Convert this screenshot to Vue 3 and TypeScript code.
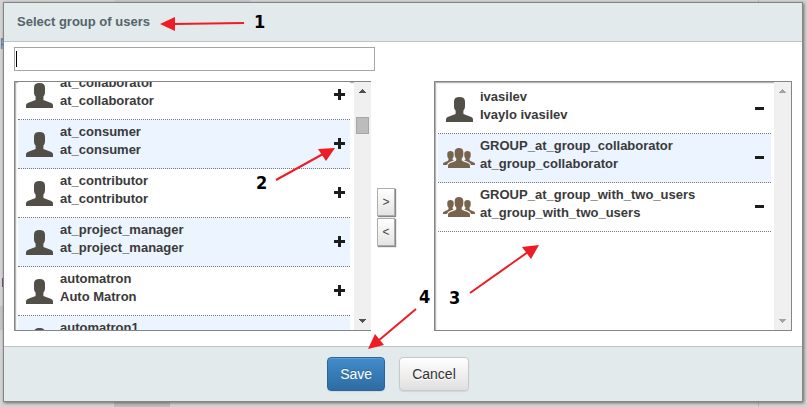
<script setup lang="ts">
import { onMounted, ref } from 'vue'

interface Authority {
  name: string
  label: string
  kind: 'user' | 'group'
}

const available = ref<Authority[]>([
  { name: 'at_collaborator', label: 'at_collaborator', kind: 'user' },
  { name: 'at_consumer', label: 'at_consumer', kind: 'user' },
  { name: 'at_contributor', label: 'at_contributor', kind: 'user' },
  { name: 'at_project_manager', label: 'at_project_manager', kind: 'user' },
  { name: 'automatron', label: 'Auto Matron', kind: 'user' },
  { name: 'automatron1', label: 'automatron1', kind: 'user' },
])

const selected = ref<Authority[]>([
  { name: 'ivasilev', label: 'Ivaylo ivasilev', kind: 'user' },
  { name: 'GROUP_at_group_collaborator', label: 'at_group_collaborator', kind: 'group' },
  { name: 'GROUP_at_group_with_two_users', label: 'at_group_with_two_users', kind: 'group' },
])

const panes = [
  { id: 'source', items: available, action: 'Add' },
  { id: 'target', items: selected, action: 'Remove' },
]

const query = ref('')
const root = ref<HTMLElement | null>(null)

onMounted(() => {
  const list = root.value?.querySelector('.pane-source .rows')
  if (list) list.scrollTop = 14
})
</script>

<template>
  <div ref="root" class="page">
    <div class="backdrop" aria-hidden="true">
      <span class="tab tab-top"></span>
      <span class="tab tab-bottom"></span>
      <span class="rule"></span>
      <span class="shade"></span>
      <span class="mark mark-blue">p</span>
      <span class="mark mark-purple"></span>
    </div>

    <section class="dialog" role="dialog" aria-labelledby="dialog-title">
      <header class="head">
        <h1 id="dialog-title">Select group of users</h1>
      </header>

      <div class="body">
        <div class="search">
          <input v-model="query" type="text" aria-label="Search users" />
          <span class="caret"></span>
        </div>

        <div class="picker">
          <div v-for="pane in panes" :key="pane.id" class="pane" :class="'pane-' + pane.id">
            <ul class="rows">
              <li v-for="item in pane.items.value" :key="item.name" class="row">
                <span class="avatar">
                  <svg v-if="item.kind === 'user'" width="27" height="25" viewBox="0 0 27 25">
                    <path
                      fill="#524e48"
                      d="M13.500 0C10 0 8 1.400 8 4.500V9c0 2 .6 3.500 1.600 4.500V17L3 19.400C1 20.200 0 21 0 22.500V25h27v-2.500c0-1.500-1-2.300-3-3.100L17.400 17v-3.500c1-1 1.600-2.500 1.600-4.500V4.500C19 1.400 17 0 13.500 0z"
                    />
                  </svg>
                  <svg v-else width="32" height="20" viewBox="0 0 32 20">
                    <g fill="#78634c">
                      <path
                        d="M16 0c-2.800 0-4.300 1.400-4.300 4v2.500c0 1.600.6 3 1.600 4v1.700c-.8 1.100-2.300 1.700-4.500 2.300C6.600 15.200 5 16 5 17.800V20h22v-2.200c0-1.800-1.600-2.600-3.800-3.300-2.200-.6-3.700-1.200-4.500-2.300v-1.700c1-1 1.600-2.400 1.600-4V4c0-2.600-1.500-4-4.300-4z"
                      />
                      <path
                        d="M7.500 3C5.500 3 4.300 4 4.300 5.800v2c0 1.100.5 2.200 1.200 2.800v1.500c-.6 1-1.700 1.400-3.200 1.900C.8 14.500 0 15 0 16.200V17h4c.5-1.800 2-2.900 4.500-3.700l2.300-.8-1.300-1.100v-.8c.8-.7 1.200-1.700 1.200-2.800v-2C10.700 4 9.500 3 7.500 3z"
                      />
                      <path
                        d="M24.500 3c2 0 3.200 1 3.200 2.800v2c0 1.100-.5 2.200-1.200 2.800v1.500c.6 1 1.700 1.400 3.200 1.900 1.500.5 2.300 1 2.300 2.200V17h-4c-.5-1.800-2-2.900-4.500-3.700l-2.300-.8 1.300-1.100v-.8c-.8-.7-1.200-1.700-1.200-2.800v-2C21.300 4 22.500 3 24.500 3z"
                      />
                    </g>
                  </svg>
                </span>
                <span class="who">
                  <span>{{ item.name }}</span>
                  <span>{{ item.label }}</span>
                </span>
                <button type="button" class="act" :aria-label="pane.action + ' ' + item.name">
                  <svg v-if="pane.id === 'source'" width="11" height="11" viewBox="0 0 11 11">
                    <path fill="#1c1c1c" d="M4 0h3v4h4v3H7v4H4V7H0V4h4z" />
                  </svg>
                  <svg v-else width="11" height="11" viewBox="0 0 11 11">
                    <path fill="#1c1c1c" d="M0 4h9v3H0z" />
                  </svg>
                </button>
              </li>
            </ul>
            <div class="scrollbar" aria-hidden="true">
              <svg class="step" width="17" height="17" viewBox="0 0 17 17" shape-rendering="crispEdges">
                <path d="M8 7h1v1h1v1h1v1h1v1H5v-1h1V9h1V8h1z" />
              </svg>
              <span class="thumb"></span>
              <svg class="step" width="17" height="17" viewBox="0 0 17 17" shape-rendering="crispEdges">
                <path d="M5 6h7v1h-1v1h-1v1H9v1H8V9H7V8H6V7H5z" />
              </svg>
            </div>
          </div>

          <div class="movers">
            <button type="button" aria-label="Move right">&gt;</button>
            <button type="button" aria-label="Move left">&lt;</button>
          </div>
        </div>
      </div>

      <footer class="foot">
        <button type="button" class="btn primary">Save</button>
        <button type="button" class="btn">Cancel</button>
      </footer>
    </section>

    <svg class="callouts" width="807" height="407" viewBox="0 0 807 407">
      <g stroke="#ee1c25" stroke-width="2">
        <path d="M244 23L174 24M276 180L323 154M470 293L528 252M416 309L378 341" />
      </g>
      <g fill="#ee1c25">
        <path d="M160 24l15-7v14zM335 148l-17 1 8 12zM539 245l-17 2 9 12zM368 349l7-15 9 11z" />
      </g>
      <g class="digits">
        <text x="254" y="28">1</text>
        <text x="256" y="189">2</text>
        <text x="449" y="304">3</text>
        <text x="419" y="303">4</text>
      </g>
    </svg>
  </div>
</template>

<style>
body {
  background: #d4d4d4;
}
</style>

<style scoped>
.page {
  position: relative;
  min-height: 100vh;
  box-sizing: border-box;
  padding: 2px 4px 4px 3px;
  overflow: hidden;
  font-family: 'Liberation Sans', Arial, sans-serif;
}

.backdrop {
  position: absolute;
  inset: 0;
  overflow: hidden;
}

.backdrop span {
  position: absolute;
}

.tab-top {
  left: 114px;
  top: 0;
  width: 136px;
  height: 3px;
  background: #cacaca;
}

.tab-bottom {
  left: 114px;
  bottom: 0;
  width: 56px;
  height: 5px;
  background: #bebebe;
}

.rule {
  left: 758px;
  top: 0;
  bottom: 0;
  width: 1px;
  background: #bdbdbd;
}

.shade {
  left: 0;
  top: 306px;
  width: 3px;
  height: 24px;
  background: #c4c4c4;
}

.mark-blue {
  left: 0;
  top: 32px;
  font-size: 14px;
  line-height: 18px;
  color: #4f7fae;
}

.mark-purple {
  left: 2px;
  top: 278px;
  width: 1px;
  height: 9px;
  background: #80508c;
}

.dialog {
  position: relative;
  border: 1px solid #858585;
  background: #fff;
  box-shadow: 1px 1px 3px rgba(0, 0, 0, 0.5);
}

.head {
  padding: 10px 13px;
  background: #e2eaeb;
  border-bottom: 1px solid #bfc3c4;
}

.head h1 {
  margin: 0;
  font-size: 13px;
  line-height: 18px;
  color: #56636b;
}

.body {
  padding: 5px 10px 15px;
}

.search {
  position: relative;
  margin-bottom: 10px;
}

.search input {
  display: block;
  width: 361px;
  max-width: 100%;
  height: 24px;
  box-sizing: border-box;
  padding: 2px;
  border: 1px solid #a5a5a5;
  background: #fff;
  outline: none;
  font: 13px 'Liberation Sans', Arial, sans-serif;
}

.caret {
  position: absolute;
  left: 2px;
  top: 4px;
  width: 1px;
  height: 16px;
  background: #000;
}

.picker {
  display: grid;
  grid-template-columns: 1fr 62px 1fr;
}

.pane {
  display: flex;
  height: 250px;
  box-sizing: border-box;
  border: 1px solid #858585;
  box-shadow: inset 1px 1px 0 #b4b4b4, inset 2px 2px 0 #f0f0f0;
  grid-row: 1;
}

.pane-source {
  grid-column: 1;
  margin-right: 1px;
  border-right: 0;
}

.pane-target {
  grid-column: 3;
}

.rows {
  flex: 1;
  min-width: 0;
  margin: 0;
  padding: 3px;
  overflow-y: auto;
  scrollbar-width: none;
  list-style: none;
}

.pane-source .rows {
  padding-right: 4px;
}

.row {
  display: flex;
  height: 48px;
  background: #fff;
  border-bottom: 1px dotted #777;
}

.row:nth-child(even) {
  background: #ebf4ff;
}

.avatar {
  display: flex;
  flex: none;
  align-items: center;
  justify-content: center;
  width: 42px;
}

.who {
  display: flex;
  flex: 1;
  min-width: 0;
  flex-direction: column;
  padding-top: 3px;
  font-size: 13px;
  font-weight: bold;
  line-height: 18px;
  color: #3a3a3a;
  white-space: nowrap;
}

.act {
  display: flex;
  flex: none;
  align-items: center;
  justify-content: center;
  width: 21px;
  padding: 0 0 2px;
  border: 0;
  background: none;
  cursor: pointer;
}

.scrollbar {
  display: flex;
  flex: none;
  flex-direction: column;
  justify-content: space-between;
  width: 17px;
  background: #f0f0f0;
}

.step {
  display: block;
  fill: #505050;
}

.thumb {
  box-sizing: border-box;
  height: 17px;
  margin: 18px 2px auto;
  border: 1px solid #a6a6a6;
  background: #bcbcbc;
}

.pane-target .step {
  fill: #a3a3a3;
}

.pane-target .thumb {
  display: none;
}

.movers {
  display: flex;
  grid-column: 2;
  grid-row: 1;
  flex-direction: column;
  align-items: flex-start;
  justify-content: center;
  gap: 2px;
  padding: 22px 0 0 5px;
}

.movers button {
  width: 18px;
  height: 28px;
  padding: 0;
  border: 1px solid #adadad;
  background: linear-gradient(#fff, #e4e4e4);
  box-shadow: 1px 1px 1px #888;
  font: 12px 'Liberation Sans', Arial, sans-serif;
  color: #444;
}

.foot {
  display: flex;
  justify-content: center;
  gap: 14px;
  padding: 10px 10px 10px 0;
  background: #e2eaeb;
  border-top: 1px solid #bfc3c4;
}

.btn {
  padding: 6px 12px;
  border: 1px solid #c8c8c8;
  border-radius: 4px;
  background: linear-gradient(#fff, #e0e0e0);
  box-shadow: inset 0 1px 0 rgba(255, 255, 255, 0.15), 0 1px 1px rgba(0, 0, 0, 0.08);
  font: 14px/20px 'Liberation Sans', Arial, sans-serif;
  color: #333;
  text-shadow: 0 1px 0 #fff;
}

.btn.primary {
  border-color: #2b669a;
  background: linear-gradient(#428bca, #2d6ca2);
  color: #fff;
  text-shadow: 0 -1px 0 rgba(0, 0, 0, 0.2);
}

.callouts {
  position: absolute;
  left: 0;
  top: 0;
  pointer-events: none;
}

.digits {
  font-family: 'DejaVu Sans Condensed', 'DejaVu Sans', sans-serif;
  font-size: 18px;
  font-weight: bold;
  fill: #000;
}
</style>
